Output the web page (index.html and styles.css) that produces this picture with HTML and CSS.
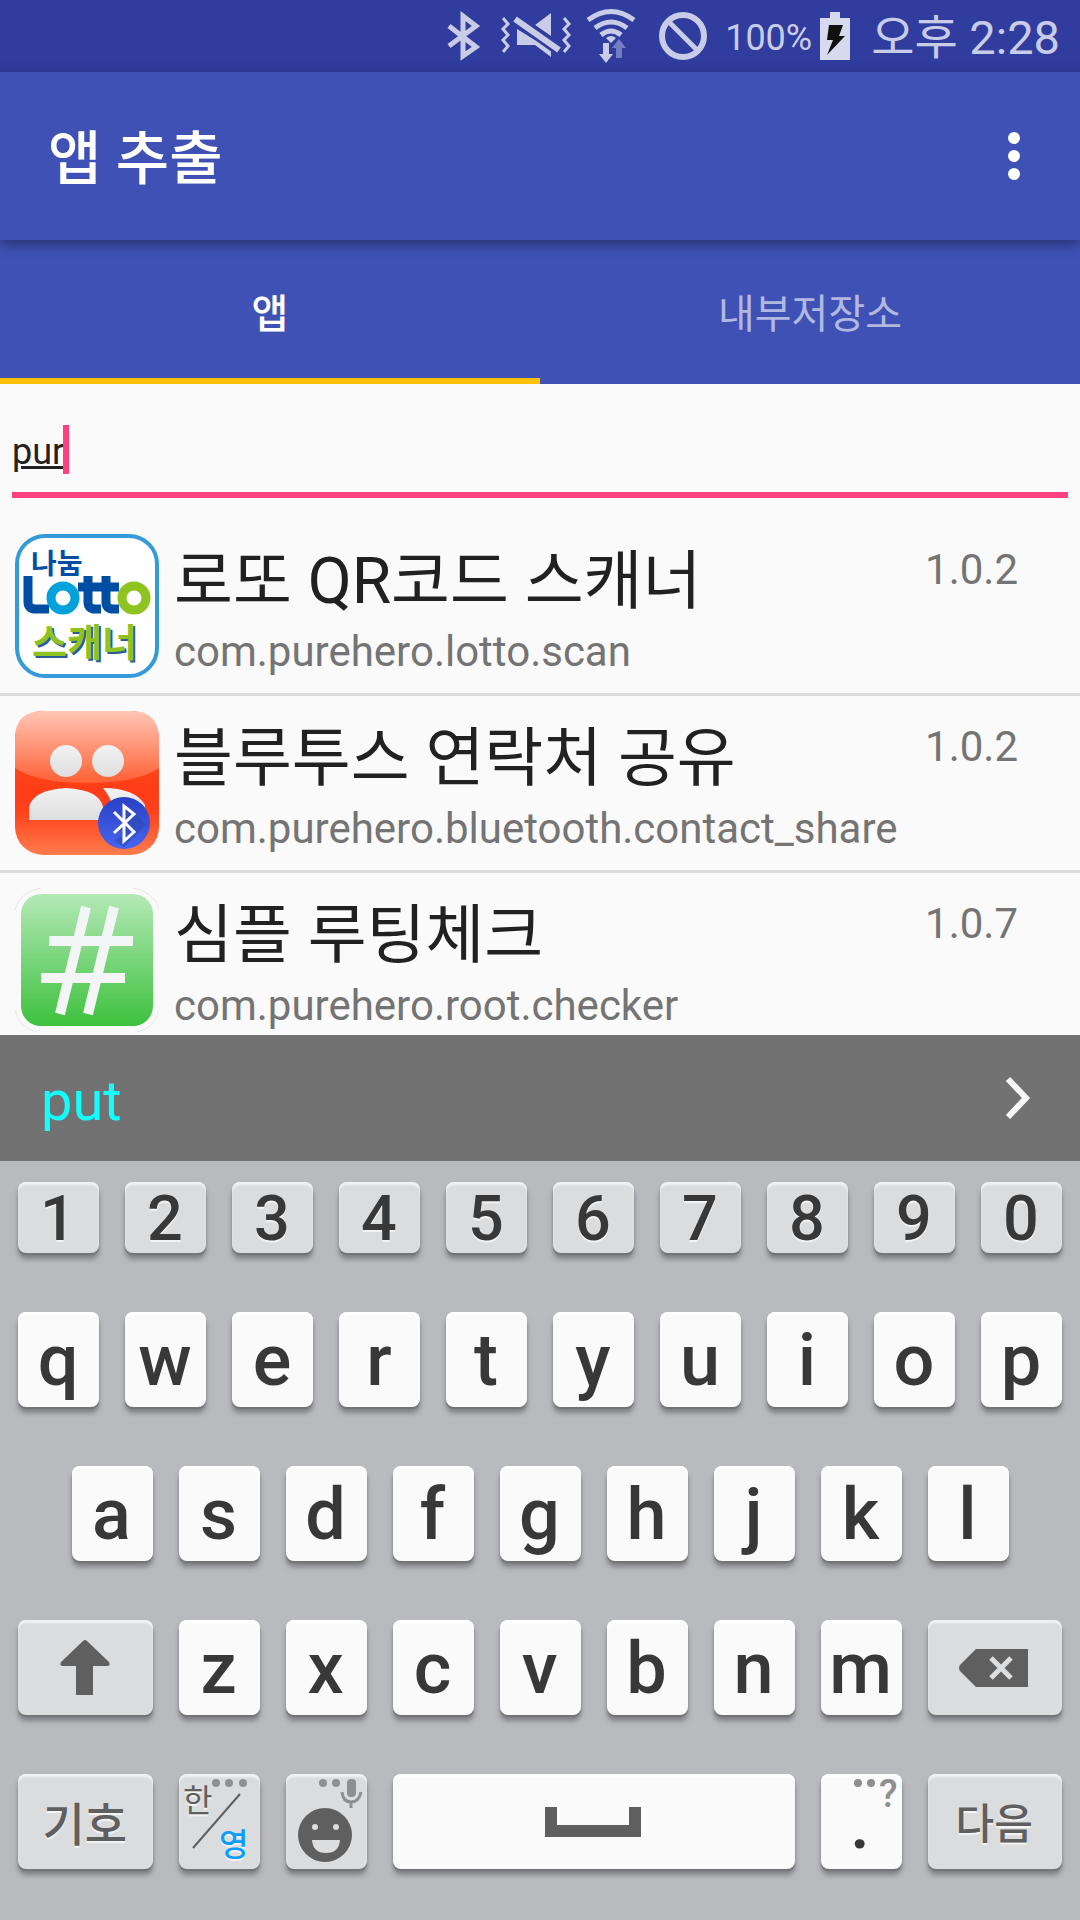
FILE: index.html
```html
<!DOCTYPE html>
<html lang="ko">
<head>
<meta charset="utf-8">
<meta name="viewport" content="width=device-width, initial-scale=1">
<title>앱 추출</title>
<link rel="stylesheet" href="styles.css">
</head>
<body>
<div class="status-bar">
  <svg class="status-icon" width="34" height="48" viewBox="0 0 34 48" aria-label="블루투스"><path d="M2 14L29 35 16 44V4L29 14 2 34" fill="none" stroke="currentColor" stroke-width="5"/></svg>
  <svg class="status-icon icon-mute" width="70" height="46" viewBox="0 0 70 46" aria-label="무음">
    <path d="M2 5l5 6-5 5 5 6-5 5 5 6-5 6M63 5l5 6-5 5 5 6-5 5 5 6-5 6" fill="none" stroke="currentColor" stroke-width="3"/>
    <path d="M50 0v23L34 12zM16 16l34 21v7L34 32H16z" fill="currentColor"/>
    <path d="M14 5l44 32" stroke="#303d9f" stroke-width="12"/><path d="M14 6l44 31" stroke="currentColor" stroke-width="6"/>
  </svg>
  <svg class="status-icon icon-wifi" width="50" height="54" viewBox="0 0 50 54" aria-label="와이파이">
    <path d="M2 11Q25-6 48 11M9 19q16-12 32 0M15 26q10-8 20 0" fill="none" stroke="currentColor" stroke-width="5"/>
    <path d="M20 29q5-4 10 0l-5 5zM17 34h6v11h4l-7 9-7-9h4z" fill="currentColor"/>
    <path class="wifi-up" d="M33 30l7 9h-4v10h-6V39h-4z"/>
  </svg>
  <svg class="status-icon icon-block" width="48" height="48" viewBox="0 0 48 48" aria-label="차단"><path d="M9 9l30 30" stroke="currentColor" stroke-width="5"/><circle cx="24" cy="24" r="21" fill="none" stroke="currentColor" stroke-width="6"/></svg>
  <span class="battery-level">100%</span>
  <svg class="status-icon" width="30" height="48" viewBox="0 0 30 48" aria-label="충전 중"><path d="M0 6h10V0h10v6h10v42H0z" fill="#d7d9ec"/><path d="M9 13h14l-4 11h6L7 43l6-15H7z" fill="#111"/></svg>
  <time class="clock" datetime="14:28">오후 2:28</time>
</div>
<header class="app-bar">
  <h1 class="app-title">앱 추출</h1>
  <button class="menu-button" type="button" aria-label="더보기"><svg width="12" height="48" viewBox="0 0 12 48" fill="#fff"><circle cx="6" cy="6" r="6"/><circle cx="6" cy="24" r="6"/><circle cx="6" cy="42" r="6"/></svg></button>
</header>
<nav class="tabs" role="tablist">
  <button class="tab tab-active" type="button" role="tab" aria-selected="true">앱</button>
  <button class="tab" type="button" role="tab" aria-selected="false">내부저장소</button>
</nav>
<main class="content">
  <div class="search"><input class="search-input" type="text" value="pur" aria-label="앱 검색" spellcheck="false" autocomplete="off"><span class="caret"></span></div>
  <ul class="app-list">
    <li class="app-row">
      <svg class="app-icon" width="144" height="144" viewBox="0 0 144 144" aria-hidden="true">
        <rect x="2" y="2" width="140" height="140" rx="28" fill="#fff" stroke="#349bd8" stroke-width="4"/>
        <text class="logo-top" x="16" y="40">나눔</text>
        <g fill="none" stroke-width="9">
          <path d="M13 42v26q0 7 8 7h13M73 42v26q0 7 7 7h6M91 42v26q0 7 7 7h6M63 53h41" stroke="#004da4"/>
          <circle cx="48" cy="64" r="12" stroke="#00a2d9"/><circle cx="119" cy="64" r="12" stroke="#8fc31f"/>
        </g>
        <text class="logo-shadow" x="19" y="124">스캐너</text>
        <text class="logo-bottom" x="17" y="122">스캐너</text>
      </svg>
      <div class="app-text"><h2 class="app-name">로또 QR코드 스캐너</h2><p class="app-package">com.purehero.lotto.scan</p></div>
      <span class="app-version">1.0.2</span>
    </li>
    <li class="app-row">
      <svg class="app-icon" width="144" height="144" viewBox="0 0 144 144" aria-hidden="true">
        <defs>
          <linearGradient id="red" x2="0" y2="1"><stop offset="0" stop-color="#ff5a2c"/><stop offset=".55" stop-color="#ff3c16"/><stop offset=".7" stop-color="#ff421c"/><stop offset="1" stop-color="#ff7c4c"/></linearGradient>
          <linearGradient id="gloss" x2="0" y2="1"><stop offset="0" stop-color="#ffc6b6"/><stop offset="1" stop-color="#ff6034"/></linearGradient>
          <linearGradient id="people" x2="0" y2="1"><stop offset="0" stop-color="#f2f2f2"/><stop offset="1" stop-color="#dedede"/></linearGradient>
          <linearGradient id="blue" x2="0" y2="1"><stop offset="0" stop-color="#2940c4"/><stop offset="1" stop-color="#4766ee"/></linearGradient>
        </defs>
        <rect width="144" height="144" rx="28" fill="url(#red)"/>
        <path d="M28 0h88q28 0 28 28v29q-22 15-72 15T0 57V28Q0 0 28 0z" fill="url(#gloss)"/>
        <g fill="url(#people)"><circle cx="51" cy="50" r="16"/><circle cx="93" cy="50" r="16"/><path d="M14 109V96q4-17 37-19 34 2 37 19v13zM88 77q32 0 42 17v15H97q4-16-9-32z"/></g>
        <circle cx="109" cy="112" r="26" fill="url(#blue)"/>
        <path d="M110 94l10 8 11 12-22 22-10-6 8-5z" fill="#2945aa" opacity=".5"/>
        <path d="M99 101l20 20-10 9V95l10 8-20 19" fill="none" stroke="#fff" stroke-width="3"/>
      </svg>
      <div class="app-text"><h2 class="app-name">블루투스 연락처 공유</h2><p class="app-package">com.purehero.bluetooth.contact_share</p></div>
      <span class="app-version">1.0.2</span>
    </li>
    <li class="app-row">
      <svg class="app-icon" width="144" height="144" viewBox="0 0 144 144" aria-hidden="true">
        <defs><linearGradient id="green" x2="0" y2="1"><stop offset="0" stop-color="#b4e9b6"/><stop offset="1" stop-color="#3dc13e"/></linearGradient></defs>
        <path d="M0 22Q4 4 26 0M118 0q22 4 26 22M0 122q4 18 22 22M144 122q-4 18-22 22" fill="none" stroke="#e6e6e6"/>
        <rect x="6" y="6" width="132" height="132" rx="20" fill="url(#green)"/>
        <path d="M71 19L45 126M99 19L73 126M34 53h84M26 90h84" fill="none" stroke="#f3f5f7" stroke-width="10"/>
      </svg>
      <div class="app-text"><h2 class="app-name">심플 루팅체크</h2><p class="app-package">com.purehero.root.checker</p></div>
      <span class="app-version">1.0.7</span>
    </li>
  </ul>
</main>
<section class="suggestions" aria-label="추천 단어">
  <button class="suggestion" type="button">put</button>
  <button class="more-button" type="button" aria-label="더 보기"><svg width="26" height="44" viewBox="0 0 26 44"><path d="M3 3l18 19L3 41" fill="none" stroke="#f7f7f7" stroke-width="6"/></svg></button>
</section>
<section class="keyboard" aria-label="키보드">
  <button class="key key-number" type="button">1</button><button class="key key-number" type="button">2</button><button class="key key-number" type="button">3</button><button class="key key-number" type="button">4</button><button class="key key-number" type="button">5</button><button class="key key-number" type="button">6</button><button class="key key-number" type="button">7</button><button class="key key-number" type="button">8</button><button class="key key-number" type="button">9</button><button class="key key-number" type="button">0</button>
  <button class="key" type="button">q</button><button class="key" type="button">w</button><button class="key" type="button">e</button><button class="key" type="button">r</button><button class="key" type="button">t</button><button class="key" type="button">y</button><button class="key" type="button">u</button><button class="key" type="button">i</button><button class="key" type="button">o</button><button class="key" type="button">p</button>
  <button class="key key-indent" type="button">a</button><button class="key" type="button">s</button><button class="key" type="button">d</button><button class="key" type="button">f</button><button class="key" type="button">g</button><button class="key" type="button">h</button><button class="key" type="button">j</button><button class="key" type="button">k</button><button class="key" type="button">l</button>
  <button class="key key-wide key-icon key-line-start" type="button" aria-label="Shift"><svg width="50" height="56" viewBox="0 0 50 56"><path d="M23 1q2-2 4 0l22 21q2 4-2 4H33v29H16V26H3q-4 0-2-4z" fill="#5f5f5f"/></svg></button>
  <button class="key" type="button">z</button><button class="key" type="button">x</button><button class="key" type="button">c</button><button class="key" type="button">v</button><button class="key" type="button">b</button><button class="key" type="button">n</button><button class="key" type="button">m</button>
  <button class="key key-wide key-icon" type="button" aria-label="지우기"><svg width="70" height="38" viewBox="0 0 70 38"><path d="M17 0h52v38H17L1 22q-2-3 0-6z" fill="#5f5f5f"/><path d="M32 9l20 20M52 9L32 29" stroke="#dcdddf" stroke-width="5"/></svg></button>
  <button class="key key-wide key-symbols key-line-start" type="button">기호</button>
  <button class="key key-gray key-icon" type="button" aria-label="한/영 전환"><svg width="81" height="95" viewBox="0 0 81 95"><g fill="#8f8f8f"><circle cx="38" cy="9" r="4"/><circle cx="51" cy="9" r="4"/><circle cx="65" cy="9" r="4"/></g><path d="M15 74L62 20" stroke="#5f5f5f" stroke-width="2"/><text class="lang-off" x="5" y="38">한</text><text class="lang-on" x="41" y="82">영</text></svg></button>
  <button class="key key-gray key-icon" type="button" aria-label="이모티콘"><svg width="81" height="95" viewBox="0 0 81 95"><g fill="#8f8f8f"><circle cx="38" cy="9" r="4"/><circle cx="51" cy="9" r="4"/><rect x="62" y="5" width="9" height="18" rx="4"/></g><path d="M57 18q1 10 9 10t10-10M66 28v6" fill="none" stroke="#8f8f8f" stroke-width="3"/><circle cx="40" cy="61" r="27" fill="#5f5f5f"/><g fill="#dcdddf"><circle cx="30" cy="53" r="3"/><circle cx="51" cy="53" r="3"/><path d="M27 66h28q-1 13-14 13T27 66z"/></g></svg></button>
  <button class="key key-space key-icon" type="button" aria-label="스페이스"><svg width="96" height="30" viewBox="0 0 96 30"><path d="M0 0h12v18h72V0h12v30H0z" fill="#5f5f5f"/></svg></button>
  <button class="key key-icon" type="button" aria-label="마침표"><svg width="81" height="95" viewBox="0 0 81 95"><g fill="#8f8f8f"><circle cx="38" cy="9" r="4"/><circle cx="51" cy="9" r="4"/></g><text class="key-hint" x="59" y="33">?</text><text class="key-period" x="40" y="74">.</text></svg></button>
  <button class="key key-wide key-next" type="button">다음</button>
</section>
</body>
</html>
```
FILE: styles.css
```css
* {
  box-sizing: border-box;
}

body {
  margin: 0;
  height: 100vh;
  display: flex;
  flex-direction: column;
  overflow: hidden;
  background: #fafafa;
  color: #212121;
  font-family: Roboto, "Noto Sans CJK KR", sans-serif;
}

button {
  margin: 0;
  padding: 0;
  border: 0;
  background: none;
  color: inherit;
  font-family: inherit;
}

svg {
  display: block;
  flex: none;
  overflow: visible;
}

.status-bar {
  flex: none;
  height: 72px;
  padding-right: 20px;
  display: flex;
  align-items: center;
  justify-content: flex-end;
  background: #303d9f;
  color: #c9cce6;
}

.icon-mute {
  margin-left: 20px;
}

.icon-wifi {
  margin-left: 15px;
}

.icon-block {
  margin-left: 23px;
}

.wifi-up {
  fill: #747dc0;
}

.battery-level {
  margin: 0 8px 0 18px;
  padding-top: 4px;
  font-size: 36px;
  line-height: 48px;
}

.clock {
  margin-left: 21px;
  padding-top: 3px;
  font-size: 47px;
  line-height: 56px;
}

.app-bar {
  position: relative;
  z-index: 1;
  flex: none;
  height: 168px;
  padding: 0 60px 0 48px;
  display: flex;
  align-items: center;
  justify-content: space-between;
  background: #3f51b5;
  color: #fff;
  box-shadow: 0 4px 12px rgba(0, 0, 0, 0.4);
}

.app-title {
  margin: 0;
  padding-top: 6px;
  font-size: 58px;
  font-weight: 500;
  line-height: 72px;
}

.tabs {
  flex: none;
  height: 144px;
  display: flex;
  background: #3f51b5;
}

.tab {
  flex: 1;
  padding-top: 12px;
  border-bottom: 6px solid transparent;
  color: #b2b9e1;
  font-size: 40px;
  font-weight: 400;
  line-height: 48px;
}

.tab-active {
  border-color: #ffc107;
  color: #fff;
  font-weight: 500;
}

.content {
  flex: 1;
  min-height: 0;
  overflow: hidden;
}

.search {
  position: relative;
  padding: 24px 12px 21px;
}

.search-input {
  display: block;
  width: 100%;
  height: 90px;
  padding: 4px 0 0;
  border: 0;
  border-bottom: 6px solid #ff4081;
  outline: 0;
  background: none;
  color: #212121;
  font-family: inherit;
  font-size: 36px;
  text-decoration: underline;
}

.caret {
  position: absolute;
  left: 63px;
  top: 41px;
  width: 6px;
  height: 49px;
  background: #ff4081;
}

.app-list {
  margin: 0;
  padding: 0;
  list-style: none;
}

.app-row {
  height: 177px;
  padding: 15px 62px 15px 15px;
  display: flex;
  border-bottom: 3px solid #dcdcdc;
}

.app-text {
  flex: 1;
  min-width: 0;
  padding-left: 15px;
}

.app-name {
  margin: 0;
  padding-top: 4px;
  font-size: 64px;
  font-weight: 400;
  line-height: 88px;
}

.app-package,
.app-version {
  margin: 0;
  color: #747474;
  font-size: 42px;
  line-height: 52px;
}

.app-version {
  padding-top: 10px;
}

.logo-top,
.logo-bottom,
.logo-shadow {
  font-family: "Noto Sans CJK KR", sans-serif;
  font-weight: 700;
}

.logo-top {
  fill: #004da4;
  font-size: 28px;
}

.logo-bottom {
  fill: #8fc31f;
  font-size: 38px;
}

.logo-shadow {
  fill: #2a5c96;
  font-size: 38px;
}

.suggestions {
  flex: none;
  height: 126px;
  padding: 0 49px 0 41px;
  display: flex;
  align-items: center;
  justify-content: space-between;
  background: #727272;
}

.suggestion {
  padding-top: 6px;
  color: #1ff;
  font-size: 56px;
  line-height: 64px;
}

.keyboard {
  flex: none;
  padding: 21px 5px 51px;
  display: grid;
  grid-template-columns: repeat(20, 1fr);
  grid-template-rows: 71px repeat(4, 95px);
  row-gap: 59px;
  background: #b9babe;
}

.key {
  grid-column-end: span 2;
  min-width: 0;
  margin: 0 13px;
  padding: 3px 1px 0 0;
  display: flex;
  align-items: center;
  justify-content: center;
  border-radius: 8px;
  background: #fafafa;
  box-shadow: 0 2px 1px #747477, 0 6px 5px rgba(80, 80, 88, 0.55), inset 0 3px 2px #fff;
  color: #383838;
  font-size: 72px;
  font-weight: 500;
  line-height: 84px;
}

.key-number,
.key-gray,
.key-wide {
  background: #dbdcde;
  box-shadow: 0 2px 1px #747477, 0 6px 5px rgba(80, 80, 88, 0.55), inset 0 3px 2px #f1f2f3;
  text-shadow: 0 2px 1px #f4f4f4;
}

.key-number {
  font-size: 63px;
  line-height: 68px;
}

.key-indent {
  grid-column: 2 / span 2;
}

.key-wide {
  grid-column-end: span 3;
  color: #5f5f5f;
}

.key-line-start {
  grid-column-start: 1;
}

.key-icon {
  padding-top: 0;
}

.key-symbols,
.key-next {
  padding-top: 6px;
  font-size: 46px;
}

.key-next {
  font-size: 42px;
}

.key-space {
  grid-column-end: span 8;
}

.lang-off,
.lang-on {
  fill: #5f5f5f;
  font-size: 32px;
  font-weight: 400;
}

.lang-on {
  fill: #0a9dff;
  font-weight: 500;
}

.key-hint {
  fill: #8f8f8f;
  font-size: 38px;
}

.key-period {
  fill: #383838;
  font-size: 72px;
  text-anchor: middle;
}
```
